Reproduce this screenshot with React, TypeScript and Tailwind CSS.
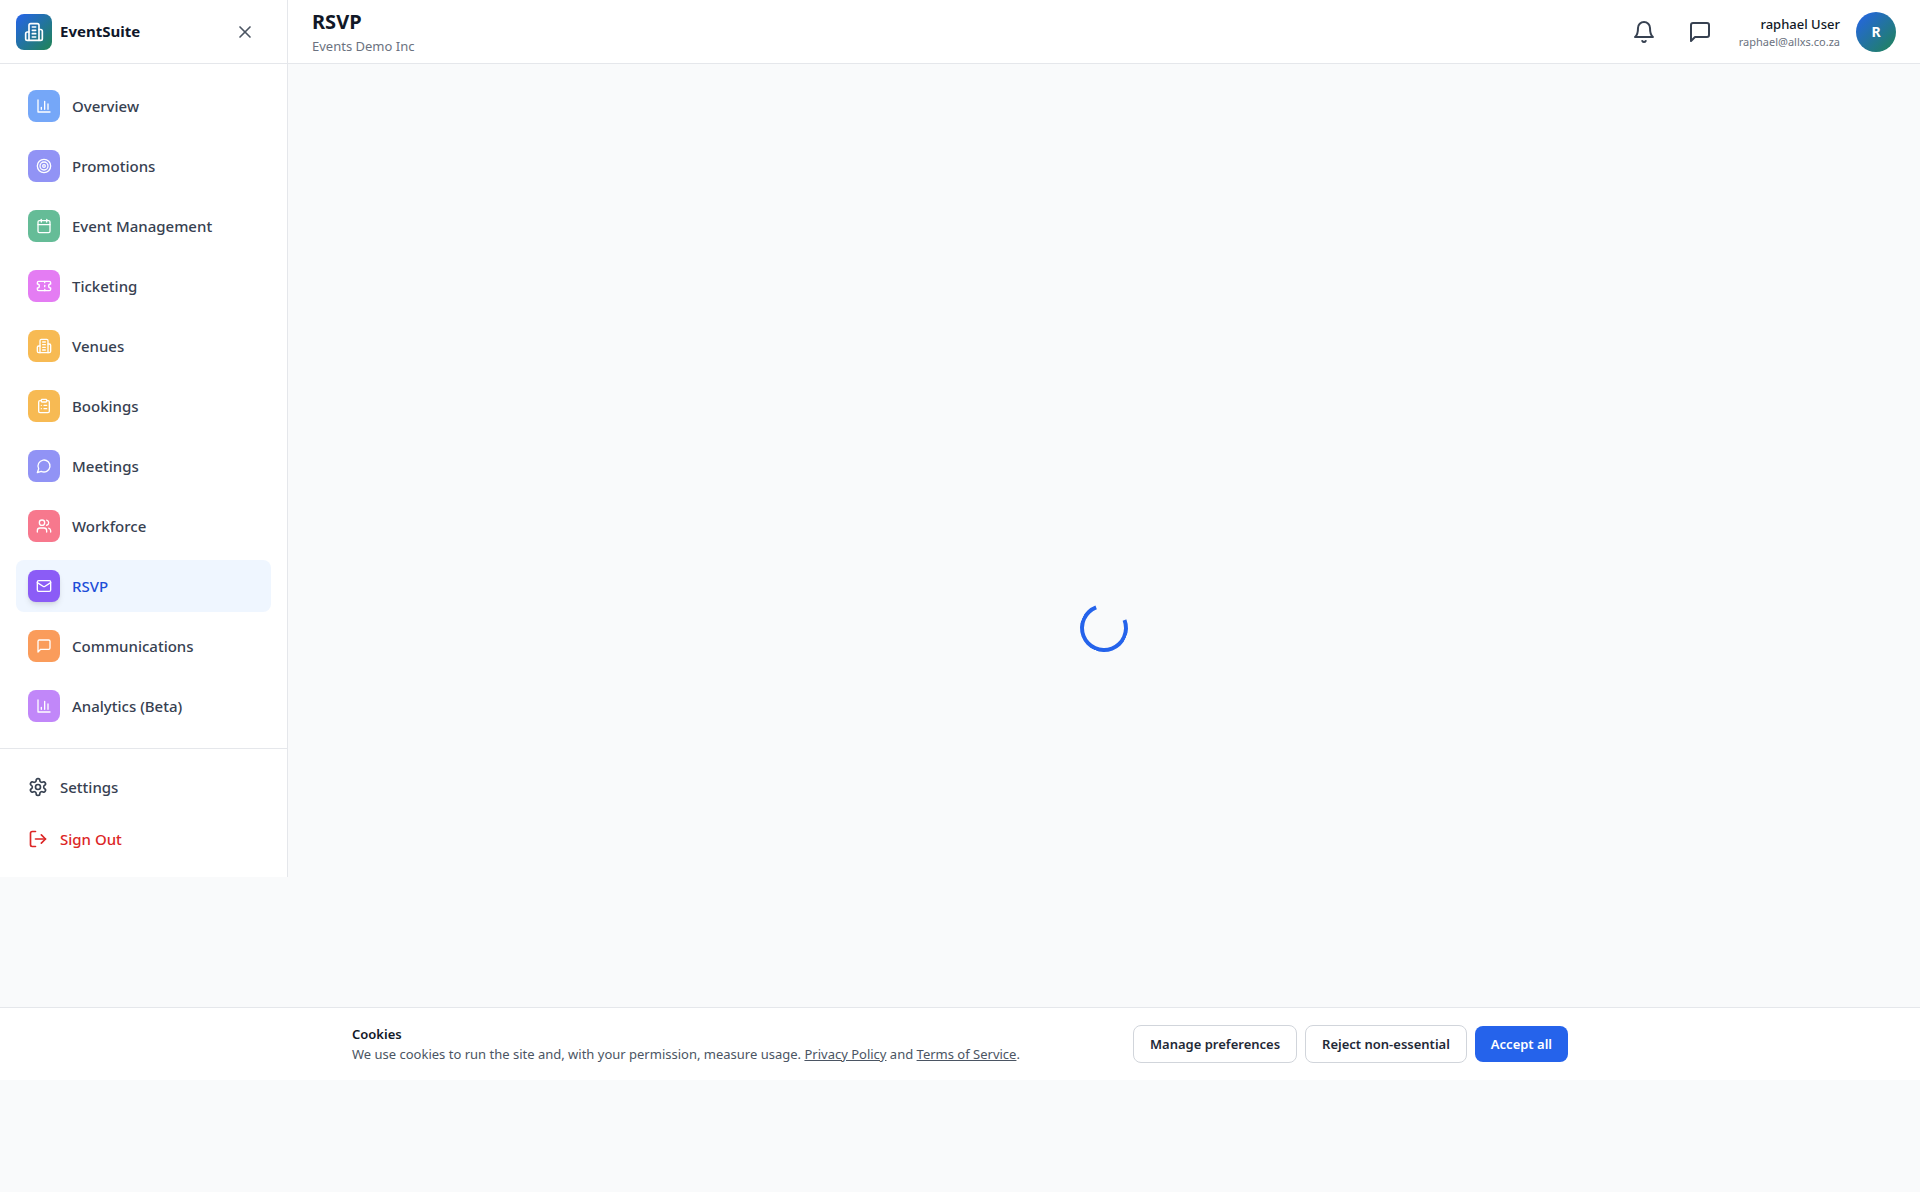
import type { ComponentType, ReactNode } from "react";
import { Calendar, ClipboardList, LogOut, Mail, Target, Ticket, Users, X } from "lucide-react";

type IconProps = { className?: string };

function Icon({ className, children }: IconProps & { children: ReactNode }) {
  return (
    <svg
      viewBox="0 0 24 24"
      fill="none"
      stroke="currentColor"
      strokeWidth="2"
      strokeLinecap="round"
      strokeLinejoin="round"
      aria-hidden="true"
      className={className}
    >
      {children}
    </svg>
  );
}

const BuildingIcon = ({ className }: IconProps) => (
  <Icon className={className}>
    <path d="M6 22V4a2 2 0 0 1 2-2h8a2 2 0 0 1 2 2v18Z" />
    <path d="M6 12H4a2 2 0 0 0-2 2v6a2 2 0 0 0 2 2h2" />
    <path d="M18 9h2a2 2 0 0 1 2 2v9a2 2 0 0 1-2 2h-2" />
    <path d="M10 6h4M10 10h4M10 14h4M10 18h4" />
  </Icon>
);

const ChartIcon = ({ className }: IconProps) => (
  <Icon className={className}>
    <path d="M3 3v18h18" />
    <path d="M18 17V9M13 17V5M8 17v-3" />
  </Icon>
);

const ChatSquareIcon = ({ className }: IconProps) => (
  <Icon className={className}>
    <path d="M21 15a2 2 0 0 1-2 2H7l-4 4V5a2 2 0 0 1 2-2h14a2 2 0 0 1 2 2z" />
  </Icon>
);

const ChatCircleIcon = ({ className }: IconProps) => (
  <Icon className={className}>
    <path d="M7.9 20A9 9 0 1 0 4 16.1L2 22Z" />
  </Icon>
);

const BellIcon = ({ className }: IconProps) => (
  <Icon className={className}>
    <path d="M6 8a6 6 0 0 1 12 0c0 7 3 9 3 9H3s3-2 3-9" />
    <path d="M10.3 21a1.94 1.94 0 0 0 3.4 0" />
  </Icon>
);

const GearIcon = ({ className }: IconProps) => (
  <Icon className={className}>
    <path d="M12.22 2h-.44a2 2 0 0 0-2 2v.18a2 2 0 0 1-1 1.73l-.43.25a2 2 0 0 1-2 0l-.15-.08a2 2 0 0 0-2.73.73l-.22.38a2 2 0 0 0 .73 2.73l.15.1a2 2 0 0 1 1 1.72v.51a2 2 0 0 1-1 1.74l-.15.09a2 2 0 0 0-.73 2.73l.22.38a2 2 0 0 0 2.73.73l.15-.08a2 2 0 0 1 2 0l.43.25a2 2 0 0 1 1 1.73V20a2 2 0 0 0 2 2h.44a2 2 0 0 0 2-2v-.18a2 2 0 0 1 1-1.73l.43-.25a2 2 0 0 1 2 0l.15.08a2 2 0 0 0 2.73-.73l.22-.39a2 2 0 0 0-.73-2.73l-.15-.08a2 2 0 0 1-1-1.74v-.5a2 2 0 0 1 1-1.74l.15-.09a2 2 0 0 0 .73-2.73l-.22-.38a2 2 0 0 0-2.73-.73l-.15.08a2 2 0 0 1-2 0l-.43-.25a2 2 0 0 1-1-1.73V4a2 2 0 0 0-2-2z" />
    <circle cx="12" cy="12" r="3" />
  </Icon>
);

type NavItem = { label: string; icon: ComponentType<IconProps>; color: string; active?: boolean };

const navItems: NavItem[] = [
  { label: "Overview", icon: ChartIcon, color: "bg-[#3b82f6]" },
  { label: "Promotions", icon: Target, color: "bg-[#6366f1]" },
  { label: "Event Management", icon: Calendar, color: "bg-[#24a16c]" },
  { label: "Ticketing", icon: Ticket, color: "bg-[#d946ef]" },
  { label: "Venues", icon: BuildingIcon, color: "bg-[#f59e0b]" },
  { label: "Bookings", icon: ClipboardList, color: "bg-[#f59e0b]" },
  { label: "Meetings", icon: ChatCircleIcon, color: "bg-[#6366f1]" },
  { label: "Workforce", icon: Users, color: "bg-[#f43f5e]" },
  { label: "RSVP", icon: Mail, color: "bg-[#8b5cf6]", active: true },
  { label: "Communications", icon: ChatSquareIcon, color: "bg-[#f97316]" },
  { label: "Analytics (Beta)", icon: ChartIcon, color: "bg-[#a855f7]" },
];

function Sidebar() {
  return (
    <aside className="w-72 shrink-0 self-start border-r border-[#e5e7eb] bg-white">
      <div className="flex h-16 items-center justify-between border-b border-[#e5e7eb] px-4">
        <div className="flex items-center gap-2">
          <div className="flex size-9 items-center justify-center rounded-lg bg-linear-to-br/srgb from-[#2563eb] to-[#208454]">
            <BuildingIcon className="size-5 text-white" />
          </div>
          <span className="text-[15px] font-bold text-[#0f172a]">EventSuite</span>
        </div>
        <button type="button" aria-label="Close menu" className="mr-4 text-[#4b5563]">
          <X className="size-5" />
        </button>
      </div>
      <nav aria-label="Main" className="flex flex-col gap-2 p-4">
        {navItems.map(({ label, icon: ItemIcon, color, active }) => (
          <a
            key={label}
            href="#"
            aria-current={active ? "page" : undefined}
            className={`flex h-[52px] items-center gap-3 rounded-lg px-3 text-[15px] font-medium ${
              active ? "bg-[#eff6ff] text-[#1d4ed8]" : "text-[#374151]"
            }`}
          >
            <span
              className={`flex size-8 items-center justify-center rounded-lg text-white ${color} ${
                active ? "shadow-md" : "opacity-70"
              }`}
            >
              <ItemIcon className="size-4" />
            </span>
            {label}
          </a>
        ))}
      </nav>
      <div className="flex flex-col gap-2 border-t border-[#e5e7eb] p-4">
        <a href="#" className="flex h-11 items-center gap-3 rounded-lg px-3 text-[15px] font-medium text-[#374151]">
          <GearIcon className="size-5" />
          Settings
        </a>
        <button type="button" className="flex h-11 items-center gap-3 rounded-lg px-3 text-[15px] font-medium text-[#dc2626]">
          <LogOut className="size-5" />
          Sign Out
        </button>
      </div>
    </aside>
  );
}

function TopBar() {
  return (
    <header className="flex h-16 items-center justify-between border-b border-[#e5e7eb] bg-white px-6">
      <div>
        <h1 className="text-xl leading-7 font-bold text-[#111827]">RSVP</h1>
        <p className="text-[13px] leading-5 text-[#6b7280]">Events Demo Inc</p>
      </div>
      <div className="flex items-center gap-4">
        <button type="button" aria-label="Notifications" className="p-2 text-[#374151]">
          <BellIcon className="size-6" />
        </button>
        <button type="button" aria-label="Messages" className="p-2 text-[#374151]">
          <ChatSquareIcon className="size-6" />
        </button>
        <div className="min-w-26 text-right">
          <p className="text-[13px] leading-5 font-medium text-[#111827]">raphael User</p>
          <p className="text-[11px] leading-4 text-[#6b7280]">raphael@allxs.co.za</p>
        </div>
        <div className="flex size-10 items-center justify-center rounded-full bg-linear-to-br/srgb from-[#2563eb] to-[#208454] text-sm font-bold text-white">
          R
        </div>
      </div>
    </header>
  );
}

function CookieBanner() {
  return (
    <section
      aria-label="Cookies"
      className="fixed inset-x-0 bottom-28 border-t border-[#e5e7eb] bg-white"
    >
      <div className="mx-auto flex max-w-7xl items-center justify-between px-8 py-4">
        <div className="text-[13px] leading-5 text-[#4b5563]">
          <h2 className="font-semibold text-[#111827]">Cookies</h2>
          <p>
            We use cookies to run the site and, with your permission, measure usage.{" "}
            <a href="#" className="underline">Privacy Policy</a> and{" "}
            <a href="#" className="underline">Terms of Service</a>.
          </p>
        </div>
        <div className="flex items-center gap-2 text-[13px] leading-5 font-semibold">
          <button type="button" className="rounded-lg border border-[#d1d5db] px-4 py-2 text-[#1f2937]">
            Manage preferences
          </button>
          <button type="button" className="rounded-lg border border-[#d1d5db] px-4 py-2 text-[#1f2937]">
            Reject non-essential
          </button>
          <button type="button" className="rounded-lg bg-[#2563eb] px-4 py-2 text-white">
            Accept all
          </button>
        </div>
      </div>
    </section>
  );
}

export default function App() {
  return (
    <div className="flex min-h-screen bg-[#f9fafb] font-['Noto_Sans',sans-serif]">
      <Sidebar />
      <div className="flex min-w-0 flex-1 flex-col">
        <TopBar />
        <main className="flex flex-1 items-center justify-center">
          <div
            role="status"
            aria-label="Loading"
            className="size-12 rotate-[24deg] rounded-full border-4 border-[#2563eb] border-t-transparent"
          />
        </main>
      </div>
      <CookieBanner />
    </div>
  );
}
